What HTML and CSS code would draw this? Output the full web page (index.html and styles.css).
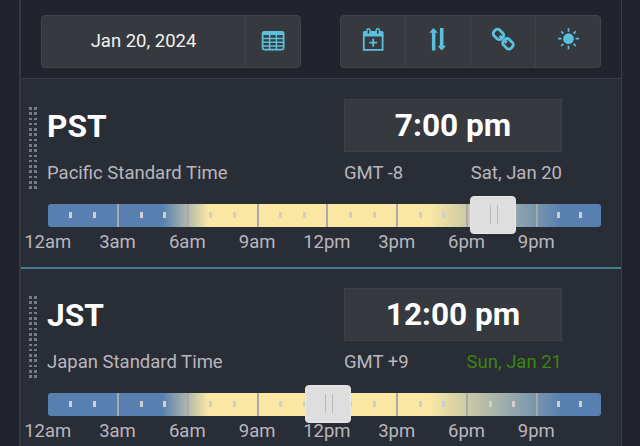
FILE: index.html
```html
<!DOCTYPE html>
<html lang="en">
<head>
    <meta charset="UTF-8">
    <meta name="viewport" content="width=device-width, initial-scale=1.0">
    <title>Time Zone Converter</title>
    <link rel="stylesheet" href="styles.css">
</head>
<body>
    <div class="container">
        <div class="toolbar">
            <div class="btn-group">
                <div class="date">Jan 20, 2024</div>
                <div class="btn btn-table">
                    <svg width="24" height="20" viewBox="0 0 24 20">
                        <rect x="1.6" y="1" width="21" height="17.6" rx="1.5" fill="none" stroke="currentColor" stroke-width="1.8"/>
                        <path d="M1.6 2.6h21" stroke="currentColor" stroke-width="3"/>
                        <path d="M1.6 7.6h21M1.6 11.2h21M1.6 14.9h21M8.6 2v17M15.4 2v17" stroke="currentColor" stroke-width="1.5"/>
                    </svg>
                </div>
            </div>
            <div class="btn-group">
                <div class="btn">
                    <svg width="24" height="26" viewBox="0 0 24 26">
                        <path d="M2.8 8v14.800h18.800V8" fill="none" stroke="currentColor" stroke-width="1.8"/>
                        <path d="M1.9 5.500q0-1.500 1.500-1.500h17.600q1.500 0 1.500 1.500v4H1.900z" fill="currentColor"/>
                        <rect x="5.900" y="1.800" width="3.200" height="5.800" rx="1.600" fill="#36393d" stroke="currentColor" stroke-width="1.500"/>
                        <rect x="15.200" y="1.800" width="3.200" height="5.800" rx="1.600" fill="#36393d" stroke="currentColor" stroke-width="1.500"/>
                        <path d="M8.200 15.700h8M12.200 11.700v8" stroke="currentColor" stroke-width="1.800"/>
                    </svg>
                </div>
                <div class="btn">
                    <svg width="24" height="26" viewBox="0 0 24 26">
                        <path d="M7.500 1l4.400 4.700H9.400V23.500H5.900V5.700H3.200zM13.900 1V18.800h-2.500l4.400 4.700 4.400-4.700h-2.700V1z" fill="currentColor"/>
                    </svg>
                </div>
                <div class="btn">
                    <svg width="26" height="26" viewBox="0 0 26 26">
                        <g fill="none" stroke="currentColor" stroke-width="2.900">
                            <rect x="3.200" y="3.400" width="10.400" height="8" rx="3" transform="rotate(45 8.400 7.400)"/>
                            <rect x="12.800" y="12.800" width="10.400" height="8" rx="3" transform="rotate(45 18 16.800)"/>
                            <path d="M9.600 8.700l2.400 2.400M14.200 13.200l2.600 2.600"/>
                        </g>
                    </svg>
                </div>
                <div class="btn">
                    <svg width="24" height="26" viewBox="0 0 24 26">
                        <circle cx="12.500" cy="11.700" r="5.400" fill="currentColor"/>
                        <path d="M12.500 1.300v3.500M12.500 18.700v3.500M2 11.700h3.500M19.500 11.700h3.500M5.200 4.400l2.200 2.200M17.600 16.800l2.200 2.200M5.200 19l2.200-2.200M17.600 6.600l2.200-2.200" stroke="currentColor" stroke-width="1.700"/>
                    </svg>
                </div>
            </div>
        </div>

        <div class="zone">
            <div class="grip"></div>
            <div class="info">
                <h2>PST</h2>
                <p>Pacific Standard Time</p>
            </div>
            <div class="clock">
                <div class="time">7:00 pm</div>
                <div class="meta"><span>GMT -8</span><span>Sat, Jan 20</span></div>
            </div>
            <div class="slider">
                <div class="track">
                    <div class="hours"><i></i><i></i></div>
                    <div class="hours"><i></i><i></i></div>
                    <div class="hours"><i></i><i></i></div>
                    <div class="hours"><i></i><i></i></div>
                    <div class="hours"><i></i><i></i></div>
                    <div class="hours"><i></i><i></i></div>
                    <div class="hours"><i></i><i></i></div>
                    <div class="hours"><i></i><i></i></div>
                </div>
                <div class="handle" style="left: 422px"></div>
                <div class="labels">
                    <span>12am</span><span>3am</span><span>6am</span><span>9am</span>
                    <span>12pm</span><span>3pm</span><span>6pm</span><span>9pm</span>
                </div>
            </div>
        </div>

        <div class="zone">
            <div class="grip"></div>
            <div class="info">
                <h2>JST</h2>
                <p>Japan Standard Time</p>
            </div>
            <div class="clock">
                <div class="time">12:00 pm</div>
                <div class="meta"><span>GMT +9</span><span class="next-day">Sun, Jan 21</span></div>
            </div>
            <div class="slider">
                <div class="track">
                    <div class="hours"><i></i><i></i></div>
                    <div class="hours"><i></i><i></i></div>
                    <div class="hours"><i></i><i></i></div>
                    <div class="hours"><i></i><i></i></div>
                    <div class="hours"><i></i><i></i></div>
                    <div class="hours"><i></i><i></i></div>
                    <div class="hours"><i></i><i></i></div>
                    <div class="hours"><i></i><i></i></div>
                </div>
                <div class="handle" style="left: 257px"></div>
                <div class="labels">
                    <span>12am</span><span>3am</span><span>6am</span><span>9am</span>
                    <span>12pm</span><span>3pm</span><span>6pm</span><span>9pm</span>
                </div>
            </div>
        </div>
    </div>
</body>
</html>
```

FILE: styles.css
```css
* {
    box-sizing: border-box;
}
body {
    margin: 0;
    height: 446px;
    overflow: hidden;
    background: #21242c;
    color: #bab6bf;
    font-family: Roboto, sans-serif;
    font-size: 18.5px;
}
.container {
    width: 603px;
    height: 446px;
    margin-left: 19px;
    border-left: 2px solid #363940;
    border-right: 1px solid #3a3d44;
    overflow: hidden;
}
/* top bar */
.toolbar {
    display: flex;
    justify-content: space-between;
    height: 79px;
    padding: 15px 20px 10px;
    border-bottom: 1px solid #3a3d44;
}
.btn-group {
    display: flex;
    height: 53px;
    background: #36393d;
    border: 1px solid #40434a;
    border-radius: 4px;
}
.date {
    width: 203px;
    line-height: 51px;
    text-align: center;
    color: #f2f2f2;
}
.btn {
    display: flex;
    justify-content: center;
    width: 65px;
    padding-top: 11px;
    border-left: 1px solid #40434a;
    color: #5bc0de;
}
.btn:first-child {
    border-left: none;
    width: 64px;
}
.btn-table {
    width: 55px;
    padding-top: 15px;
}
/* zone rows */
.zone {
    display: grid;
    grid-template-columns: 26px 297px 218px;
    grid-template-rows: 96px 72px;
    height: 188px;
    padding-top: 20px;
    background: #292d35;
}
.zone + .zone {
    border-top: 2px solid #437f90;
    padding-top: 19px;
}
.grip {
    width: 8px;
    height: 82px;
    margin: 8px 0 0 8px;
    background:
        linear-gradient(90deg, transparent 2.7px, #292d35 2.7px, #292d35 5.3px, transparent 5.3px),
        repeating-linear-gradient(#777a81 0, #777a81 2.6px, #292d35 2.6px, #292d35 5.28px);
}
h2 {
    margin: 9px 0 0;
    font-size: 31.7px;
    line-height: 37px;
    color: #fff;
}
p {
    margin: 17px 0 0;
    line-height: 22px;
}
.time {
    height: 53px;
    background: #36393d;
    border: 1px solid #3d4045;
    color: #fff;
    font-size: 31.6px;
    font-weight: bold;
    line-height: 51px;
    text-align: center;
}
.meta {
    display: flex;
    justify-content: space-between;
    margin-top: 10px;
    line-height: 22px;
}
.next-day {
    color: #3f8410;
}
.slider {
    grid-column: 1 / 4;
    position: relative;
    width: 553px;
    margin: 9px 0 0 27px;
}
.track {
    display: flex;
    height: 22.5px;
    border-radius: 3px;
    background: linear-gradient(90deg, #5780b0 20.7%, #fae7a4 29%, #fae7a4 69%, #5780b0 93%);
    overflow: hidden;
}
.hours {
    display: flex;
    flex: 0 0 69.8px;
    align-items: center;
    justify-content: space-evenly;
    border-left: 2px solid #a9a9ab;
}
.hours:first-child {
    flex-basis: 69px;
    border-left: none;
}
.hours:last-child {
    flex: 1;
}
.hours i {
    width: 3px;
    height: 6px;
    background: #cfcfd0;
}
.handle {
    position: absolute;
    top: -8px;
    width: 46px;
    height: 38px;
    border-radius: 4px;
    border: 1px solid #e6e6e6;
    background: #dedede;
}
.handle::after {
    content: "";
    position: absolute;
    top: 8px;
    left: 19px;
    width: 6px;
    height: 19px;
    border: solid #b9babf;
    border-width: 0 1px;
}
.labels {
    display: flex;
    margin: 4.5px 0 0 -35.2px;
    line-height: 22px;
}
.labels span {
    flex: 0 0 69.8px;
    text-align: center;
}
```
